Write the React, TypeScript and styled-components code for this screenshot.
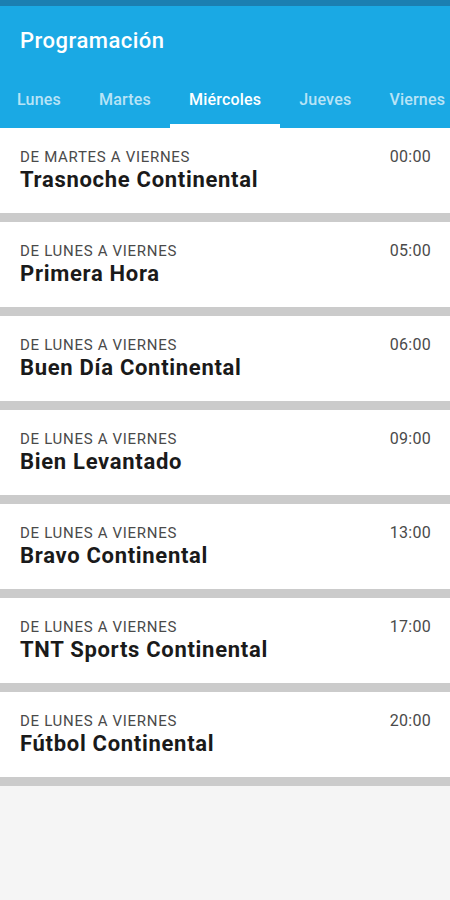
import React from 'react';
import styled, { createGlobalStyle } from 'styled-components';

const DAYS = ['Lunes', 'Martes', 'Miércoles', 'Jueves', 'Viernes'];
const ACTIVE_DAY = 2;

const SHOWS = [
  { days: 'De martes a viernes', name: 'Trasnoche Continental', time: '00:00' },
  { days: 'De lunes a viernes', name: 'Primera Hora', time: '05:00' },
  { days: 'De lunes a viernes', name: 'Buen Día Continental', time: '06:00' },
  { days: 'De lunes a viernes', name: 'Bien Levantado', time: '09:00' },
  { days: 'De lunes a viernes', name: 'Bravo Continental', time: '13:00' },
  { days: 'De lunes a viernes', name: 'TNT Sports Continental', time: '17:00' },
  { days: 'De lunes a viernes', name: 'Fútbol Continental', time: '20:00' },
];

// COMPONENT
export default function App() {
  return (
    <>
      <GlobalStyle />
      <Screen>
        <StatusBar />
        <AppBar>
          <Title>Programación</Title>
          <Tabs>
            {DAYS.map((day, i) => (
              <Tab key={day} $active={i === ACTIVE_DAY}>{day}</Tab>
            ))}
          </Tabs>
        </AppBar>
        <List>
          {SHOWS.map(show => (
            <Item key={show.time}>
              <Info>
                <Days>{show.days}</Days>
                <Name>{show.name}</Name>
              </Info>
              <Time>{show.time}</Time>
            </Item>
          ))}
        </List>
      </Screen>
    </>
  );
}

// STYLING
const GlobalStyle = createGlobalStyle`
  html, body {
    margin: 0;
    padding: 0;
    background: #f5f5f5;
  }
  body {
    font-family: Roboto, "Noto Sans", sans-serif;
  }
`;
const Screen = styled.div`
  width: 450px;
  min-height: 900px;
  background: #f5f5f5;
  display: flex;
  flex-direction: column;
  overflow: hidden;
`;
const StatusBar = styled.div`
  height: 6px;
  background: #1b7fb1;
`;
const AppBar = styled.header`
  background: #1aa9e4;
  display: flex;
  flex-direction: column;
  height: 122px;
`;
const Title = styled.h1`
  margin: 0;
  padding: 0 20px;
  height: 68px;
  display: flex;
  align-items: center;
  color: #fff;
  font-size: 22px;
  font-weight: 500;
  letter-spacing: 0.5px;
`;
const Tabs = styled.nav`
  display: flex;
  flex: 1;
  margin-left: -2px;
  overflow: hidden;
`;
const Tab = styled.div<{ $active: boolean }>`
  flex: none;
  padding: 0 19px 3px;
  display: flex;
  align-items: center;
  justify-content: center;
  font-size: 16px;
  font-weight: 500;
  letter-spacing: 0.2px;
  white-space: nowrap;
  color: ${p => (p.$active ? '#fff' : 'rgba(255, 255, 255, 0.7)')};
  box-shadow: ${p => (p.$active ? 'inset 0 -4px 0 #fff' : 'none')};
`;
const List = styled.main`
  display: flex;
  flex-direction: column;
`;
const Item = styled.section`
  height: 94px;
  box-sizing: border-box;
  padding: 19px 19px 0 20px;
  background: #fff;
  border-bottom: 9px solid #cbcbcb;
  display: flex;
  justify-content: space-between;
  align-items: flex-start;
`;
const Info = styled.div`
  display: flex;
  flex-direction: column;
`;
const Days = styled.div`
  font-size: 15px;
  letter-spacing: 0.7px;
  color: #4a4a4a;
  text-transform: uppercase;
  line-height: 20px;
`;
const Name = styled.div`
  font-size: 22px;
  font-weight: 700;
  letter-spacing: 0.7px;
  color: #1a1a1a;
  line-height: 26px;
`;
const Time = styled.div`
  font-size: 16px;
  letter-spacing: 0.3px;
  color: #4a4a4a;
  line-height: 20px;
`;
